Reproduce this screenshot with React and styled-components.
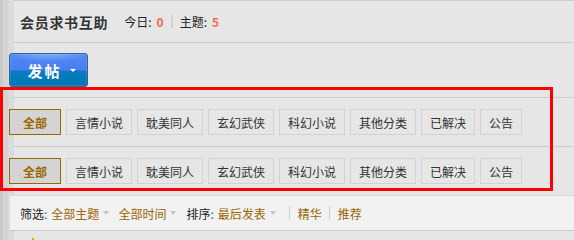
import React from "react";
import styled, { createGlobalStyle } from "styled-components";

const Global = createGlobalStyle`
  html, body { margin: 0; padding: 0; }
  body {
    width: 574px;
    height: 240px;
    overflow: hidden;
    background: linear-gradient(to right, #c9c9c9 0 3px, #d3d3d3 3px 8px, #dbdbdb 8px 14px, #e6e6e6 14px);
    font-family: "Noto Sans CJK SC", "Noto Sans", sans-serif;
    font-size: 12px;
    color: #333;
  }
`;

const Page = styled.div`
  position: relative;
  width: 574px;
  height: 240px;
`;

const Header = styled.div`
  margin-left: 14px;
  height: 41px;
  border-top: 1px solid #cdcdcd;
  border-bottom: 1px solid #cdcdcd;
  display: flex;
  align-items: center;
  padding-left: 6px;
`;

const Title = styled.h1`
  margin: 0;
  font-size: 14px;
  letter-spacing: 0.7px;
  font-weight: bold;
  color: #333;
  line-height: 20px;
`;

const Stats = styled.div`
  display: flex;
  align-items: center;
  margin-left: 16px;
  font-size: 12px;
  color: #222;
`;

const Num = styled.strong`
  color: #f26c4f;
  font-weight: bold;
  margin-left: 5px;
`;

const Pipe = styled.span`
  display: inline-block;
  width: 2px;
  height: 13px;
  background: #d2d2d2;
  margin: 0 7px 0 7px;
`;

const Toolbar = styled.div`
  margin-left: 14px;
  padding: 10px 0 10px 0;
  border-bottom: 1px solid #cdcdcd;
  display: flex;
`;

const PostButton = styled.button`
  margin-left: -5px;
  width: 79px;
  height: 34px;
  box-sizing: border-box;
  border: 1px solid #2c62a6;
  border-radius: 3px;
  background:
    radial-gradient(ellipse 40px 8px at 50% 0, rgba(140, 185, 250, 0.7), rgba(140, 185, 250, 0) 100%),
    linear-gradient(to bottom, #5288f3 0%, #4a7ef1 50%, #0a7cc0 53%, #0077b6 100%);
  color: #fff;
  font-family: "Noto Sans CJK SC", sans-serif;
  font-size: 15px;
  font-weight: bold;
  letter-spacing: 2px;
  display: flex;
  align-items: center;
  justify-content: center;
  padding: 0 0 0 6px;
  box-shadow: inset 0 0 0 1px rgba(255,255,255,0.12);
`;

const Caret = styled.span`
  display: inline-block;
  width: 0;
  height: 0;
  border-left: ${p => p.$size}px solid transparent;
  border-right: ${p => p.$size}px solid transparent;
  border-top: ${p => p.$h}px solid ${p => p.$color};
  margin-left: ${p => p.$gap}px;
`;

const TagRow = styled.div`
  margin-left: 14px;
  padding: 11px 0;
  border-bottom: ${p => (p.$last ? "none" : "1px solid #cdcdcd")};
  display: flex;
  gap: 5px;
`;

const Tag = styled.a`
  margin-left: ${p => (p.$first ? "-5px" : "0")};
  display: inline-flex;
  align-items: center;
  height: 26px;
  box-sizing: border-box;
  padding: 0 ${p => (p.$active ? 13 : 8)}px;
  border: 1px solid ${p => (p.$active ? "#996600" : "#d2d2d2")};
  background: ${p => (p.$active ? "#d4d4d4" : "#e6e6e6")};
  color: ${p => (p.$active ? "#996600" : "#333")};
  font-weight: ${p => (p.$active ? "bold" : "normal")};
  font-size: 12px;
  white-space: nowrap;
`;

const FilterBar = styled.div`
  margin-left: 10px;
  height: 34px;
  background: #f2f2f2;
  border-top: 1px solid #dadada;
  border-bottom: 1px solid #cacaca;
  display: flex;
  align-items: center;
  padding-left: 10px;
  font-size: 12px;
  color: #222;
`;

const Label = styled.span`
  color: #222;
`;

const Colon = styled.span`
  color: #336699;
  margin-right: 4px;
`;

const Drop = styled.span`
  display: inline-flex;
  align-items: center;
  color: #996600;
  margin-right: ${p => p.$mr}px;
`;

const Link = styled.span`
  color: #996600;
`;

const Sep = styled.span`
  display: inline-block;
  width: 1px;
  height: 14px;
  background: #d0d0d0;
  margin: 0 8px 0 ${p => p.$ml}px;
`;

const Below = styled.div`
  margin-left: 31px;
  padding-top: 6px;
`;

const Flame = styled.span`
  display: block;
  width: 0;
  height: 0;
  border-left: 2px solid transparent;
  border-right: 2px solid transparent;
  border-bottom: 4px solid #f0a000;
`;

const Annotation = styled.div`
  position: absolute;
  left: 0;
  top: 87px;
  width: 553px;
  height: 104px;
  box-sizing: border-box;
  border: 3px solid #ff0000;
  pointer-events: none;
`;

const tags = ["全部", "言情小说", "耽美同人", "玄幻武侠", "科幻小说", "其他分类", "已解决", "公告"];

function Tags({ last }) {
  return (
    <TagRow $last={last}>
      {tags.map((t, i) => (
        <Tag key={t} $active={i === 0} $first={i === 0}>
          {t}
        </Tag>
      ))}
    </TagRow>
  );
}

export default function App() {
  return (
    <Page>
      <Global />
      <Header>
        <Title>会员求书互助</Title>
        <Stats>
          今日:<Num>0</Num>
          <Pipe />
          主题:<Num>5</Num>
        </Stats>
      </Header>
      <Toolbar>
        <PostButton>
          发帖
          <Caret $size={3} $h={3} $color="#fff" $gap={8} />
        </PostButton>
      </Toolbar>
      <Tags />
      <Tags last />
      <FilterBar>
        <Label>筛选</Label>
        <Colon>:</Colon>
        <Drop $mr={9}>
          全部主题
          <Caret $size={3} $h={4} $color="#c4c4c4" $gap={4} />
        </Drop>
        <Drop $mr={10}>
          全部时间
          <Caret $size={3} $h={4} $color="#c4c4c4" $gap={4} />
        </Drop>
        <Label>排序</Label>
        <Colon>:</Colon>
        <Drop $mr={0}>
          最后发表
          <Caret $size={3} $h={4} $color="#c4c4c4" $gap={4} />
        </Drop>
        <Sep $ml={13} />
        <Link>精华</Link>
        <Sep $ml={7} />
        <Link>推荐</Link>
      </FilterBar>
      <Below>
        <Flame />
      </Below>
      <Annotation />
    </Page>
  );
}
